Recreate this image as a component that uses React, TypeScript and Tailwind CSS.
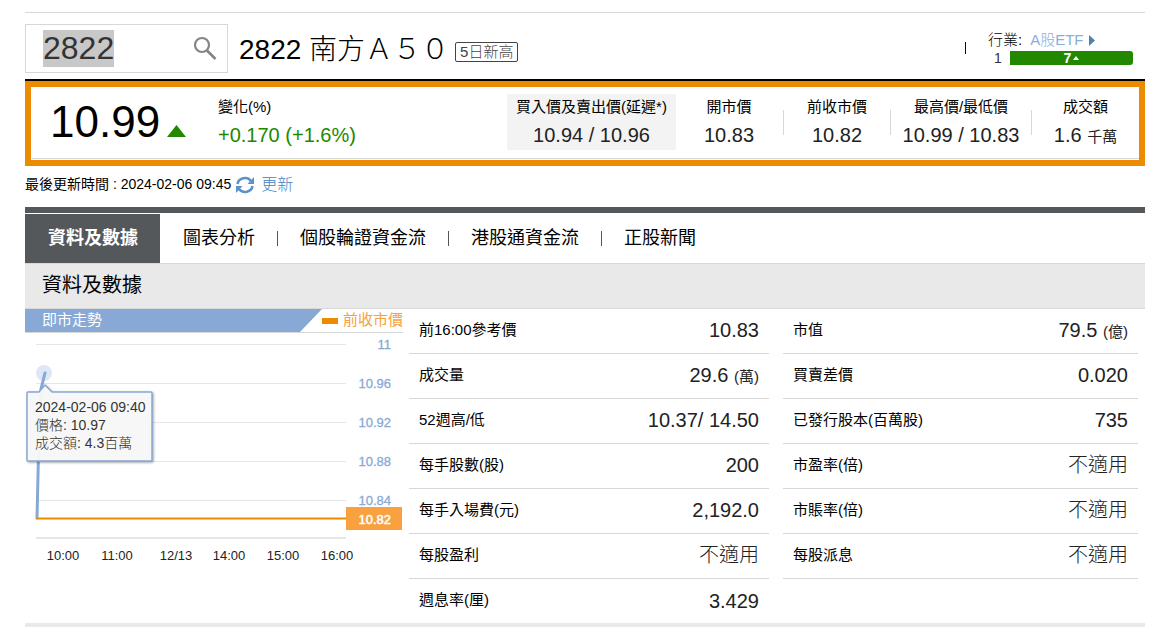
import React from "react";

type Row = { label: string; value: string; unit?: string };

// full-width A50, as the exchange lists the name
const stockName = "南方\uFF21\uFF15\uFF10";

const tabs = ["圖表分析", "個股輪證資金流", "港股通資金流", "正股新聞"];

const quotes = [
  { label: "開市價", value: "10.83", width: "w-[107px]" },
  { label: "前收市價", value: "10.82", width: "w-[107px]" },
  { label: "最高價/最低價", value: "10.99 / 10.83", width: "w-[141px]" },
  { label: "成交額", value: "1.6", unit: "千萬", width: "w-[108px]" },
];

const leftRows: Row[] = [
  { label: "前16:00參考價", value: "10.83" },
  { label: "成交量", value: "29.6", unit: "(萬)" },
  { label: "52週高/低", value: "10.37/ 14.50" },
  { label: "每手股數(股)", value: "200" },
  { label: "每手入場費(元)", value: "2,192.0" },
  { label: "每股盈利", value: "不適用" },
  { label: "週息率(厘)", value: "3.429" },
];

const rightRows: Row[] = [
  { label: "市值", value: "79.5", unit: "(億)" },
  { label: "買賣差價", value: "0.020" },
  { label: "已發行股本(百萬股)", value: "735" },
  { label: "市盈率(倍)", value: "不適用" },
  { label: "市賬率(倍)", value: "不適用" },
  { label: "每股派息", value: "不適用" },
];

const yTicks = [
  { label: "11", y: 11 },
  { label: "10.96", y: 50 },
  { label: "10.92", y: 89 },
  { label: "10.88", y: 128 },
  { label: "10.84", y: 167 },
];

const xTicks = [
  { label: "10:00", x: 38 },
  { label: "11:00", x: 92 },
  { label: "12/13", x: 151 },
  { label: "14:00", x: 204 },
  { label: "15:00", x: 258 },
  { label: "16:00", x: 312 },
];

function Header() {
  return (
    <header className="flex h-[66px] items-center justify-between pt-1">
      <div className="flex items-center">
        <form className="flex h-[49px] w-[203px] items-center justify-between border border-[#d7d7d7] pl-[17px] pr-2.5">
          <input
            aria-label="股票代號"
            defaultValue="2822"
            className="h-[37px] w-[71px] bg-[#c8c8c8] text-[32px] text-[#333] outline-none"
          />
          <button type="button" aria-label="搜尋">
            <svg width="24" height="24" viewBox="0 0 24 24" fill="none" stroke="#858585">
              <circle cx="9" cy="9" r="7" strokeWidth="2.2" />
              <path d="M14 14.5 22.5 23" strokeWidth="2.6" />
            </svg>
          </button>
        </form>
        <h1 className="ml-[11px] pt-1 text-[28px] font-light leading-none">2822 {stockName}</h1>
        <span className="ml-1.5 mt-2 rounded-[2px] border border-[#444] px-1 text-[15px] font-light leading-[18px] text-[#444]">
          5日新高
        </span>
      </div>
      <div className="flex items-center pr-3 text-[15px]">
        <span className="mr-[22px] h-3 w-px bg-black" />
        <div>
          <div className="flex h-5 items-center pb-0.5 font-light">
            <span className="mr-2">行業:</span>
            <a href="#sector" className="flex items-center text-[#8aaedb]">
              A股ETF
              <svg className="ml-[5px]" width="6" height="11" viewBox="0 0 6 11">
                <path d="M0 0 6 5.500 0 11z" fill="#4e80b0" />
              </svg>
            </a>
          </div>
          <div className="flex items-center text-[14px] leading-[14px]">
            <span className="w-[22px] pl-1.5 text-[#333]">1</span>
            <span className="flex h-[14px] w-[123px] items-center justify-center gap-0.5 rounded-r-[3px] bg-[#228800] font-bold text-white">
              7
              <svg width="6" height="4" viewBox="0 0 6 4">
                <path d="M0 4 3 0 6 4z" fill="#fff" />
              </svg>
            </span>
          </div>
        </div>
      </div>
    </header>
  );
}

function Quote() {
  return (
    <section className="border-t-2 border-black">
      <div className="border-[6px] border-[#ec8b00] px-px pb-px">
        <div className="-mr-px flex h-[72px] justify-between border-b border-[#d7d7d7]">
          <div className="flex">
            <div className="flex w-[186px] items-start pl-[18px]">
              <span className="text-[44px] leading-[70px]">10.99</span>
              <svg className="ml-[7px] mt-[38px]" width="19" height="12" viewBox="0 0 19 12">
                <path d="M0 12 9.500 0 19 12z" fill="#228800" />
              </svg>
            </div>
            <div className="pt-[7px]">
              <div className="text-[15px] leading-[26px]">變化(%)</div>
              <div className="text-[20px] leading-[30px] text-[#228800]">+0.170 (+1.6%)</div>
            </div>
          </div>
          <div className="flex pt-[7px] text-center">
            <div className="h-14 w-[169px] bg-[#f3f3f3]">
              <div className="text-[15px] leading-[26px]">買入價及賣出價(延遲*)</div>
              <div className="text-[20px] leading-[30px] text-[#222]">10.94 / 10.96</div>
            </div>
            {quotes.map((q, i) => (
              <div key={q.label} className={`flex items-center h-14 ${q.width}`}>
                {i > 0 && <span className="h-[25px] w-px bg-[#d7d7d7]" />}
                <div className="flex-1">
                  <div className="text-[15px] leading-[26px]">{q.label}</div>
                  <div className="text-[20px] leading-[30px] text-[#222]">
                    {q.value}
                    {q.unit && <> <span className="text-[15px] leading-none">{q.unit}</span></>}
                  </div>
                </div>
                {i === 0 && <span className="h-[25px] w-px" />}
              </div>
            ))}
          </div>
        </div>
      </div>
    </section>
  );
}

function Tabs() {
  return (
    <nav className="flex h-[49px] items-center text-[18px]">
      <a href="#data" className="mr-px flex h-full items-center bg-[#54585b] pl-[23px] pr-[22px] font-bold text-white">
        資料及數據
      </a>
      {tabs.map((t, i) => (
        <React.Fragment key={t}>
          {i > 0 && <span className="h-[15px] w-px bg-[#555]" />}
          <a href="#tab" className="px-[22px]">
            {t}
          </a>
        </React.Fragment>
      ))}
    </nav>
  );
}

function Chart() {
  return (
    <div className="w-[378px] shrink-0">
      <div className="flex h-6 items-center justify-between border-b border-[#d7d7d7] text-[15px]">
        <div className="h-full w-[297px] bg-[#88a9d5] pl-[17px] leading-[22px] text-white [clip-path:polygon(0_0,100%_0,275px_100%,0_100%)]">
          即市走勢
        </div>
        <div className="flex items-center gap-[5px] text-[#f7a040]">
          <span className="h-1.5 w-4 bg-[#ec8b00]" />
          前收市價
        </div>
      </div>
      <svg width="378" height="240" viewBox="0 0 378 240" fontSize="13" className="overflow-visible">
        {yTicks.map((t) => (
          <g key={t.label}>
            <path d={`M11 ${t.y + 0.5}H321`} stroke="#e6e6e6" />
            <text x="366" y={t.y + 5} textAnchor="end" fill="#88a9d5" stroke="#88a9d5" strokeWidth="0.3">
              {t.label}
            </text>
          </g>
        ))}
        <path d="M11 205H321" stroke="#e6e6e6" strokeWidth="2" />
        {xTicks.map((t) => (
          <text key={t.label} x={t.x} y="227" textAnchor="middle" fill="#222">
            {t.label}
          </text>
        ))}
        <circle cx="19" cy="40" r="8" fill="#dde7f5" />
        <path d="M12 185 14 100 16 56 20 40" fill="none" stroke="#88a9d5" strokeWidth="3" strokeLinecap="round" />
        <path d="M11 185.500H321" stroke="#ec8b00" strokeWidth="2" />
        <rect x="321" y="174" width="56" height="23" fill="#f9a13f" />
        <text x="366" y="191" textAnchor="end" fill="#fff" stroke="#fff" strokeWidth="0.5">
          10.82
        </text>
        <g fontSize="14" fill="#333">
          <path
            d="M3 59H14L20 52 27 59H126Q127 59 127 60V127Q127 128 126 128H3Q2 128 2 127V60Q2 59 3 59Z"
            fill="#fbfbfb"
            fillOpacity="0.95"
            stroke="#88a9d5"
            strokeWidth="1.5"
            className="drop-shadow-[1px_1px_1px_rgba(0,0,0,0.35)]"
          />
          <text x="10" y="79">2024-02-06 09:40</text>
          <text x="10" y="97" className="font-light">價格: 10.97</text>
          <text x="10" y="115" className="font-light">成交額: 4.3百萬</text>
        </g>
      </svg>
    </div>
  );
}

function DataTable({ rows, last }: { rows: Row[]; last?: boolean }) {
  return (
    <table className="w-full border-separate border-spacing-0">
      <tbody>
        {rows.map((r, i) => {
          const line = last || i < rows.length - 1 ? "border-b border-[#d7d7d7]" : "";
          return (
            <tr key={r.label} className="h-[45px]">
              <th scope="row" className={`pb-0.5 pl-2.5 text-left text-[15px] font-normal ${line}`}>
                {r.label}
              </th>
              <td className={`pb-0.5 pr-2.5 text-right text-[20px] font-light leading-7 text-[#222] ${line}`}>
                {r.value}
                {r.unit && <> <span className="text-[15px] font-normal leading-none">{r.unit}</span></>}
              </td>
            </tr>
          );
        })}
      </tbody>
    </table>
  );
}

function App() {
  return (
    <div className="overflow-hidden bg-white pl-[25px] pr-[19px] pt-3 font-['Liberation_Sans','Noto_Sans_CJK_TC',sans-serif] text-black">
      <div className="border-t border-[#d7d7d7]">
        <Header />
        <Quote />
        <div className="flex h-[41px] items-center pb-1 text-[14px]">
          <span>最後更新時間 : 2024-02-06 09:45</span>
          <a href="#refresh" className="ml-1 flex items-center gap-1.5 text-[16px] font-light text-[#3f83c3]">
            <svg width="20" height="18" viewBox="0 0 20 18" fill="none" stroke="#5b93c9" strokeWidth="2.600">
              <path d="M2.500 8A7.500 7 0 0 1 16 5" />
              <path d="M17.500 10A7.500 7 0 0 1 4 13" />
              <path d="M19 1V8H12.500zM1 17V10H7.500z" fill="#5b93c9" stroke="none" />
            </svg>
            更新
          </a>
        </div>
        <div className="mb-px h-1.5 bg-[#54585b]" />
        <Tabs />
        <h2 className="h-[46px] border-y border-[#d7d7d7] bg-[#e9e9e9] pl-[17px] text-[20px] leading-[42px]">
          資料及數據
        </h2>
        <main className="flex h-[314px]">
          <Chart />
          <div className="ml-1.5 flex-[360]">
            <DataTable rows={leftRows} />
          </div>
          <div className="ml-3.5 mr-[7px] flex-[355]">
            <DataTable rows={rightRows} last />
          </div>
        </main>
        <div className="h-1 bg-[#e9e9e9]" />
      </div>
    </div>
  );
}

export default App;
